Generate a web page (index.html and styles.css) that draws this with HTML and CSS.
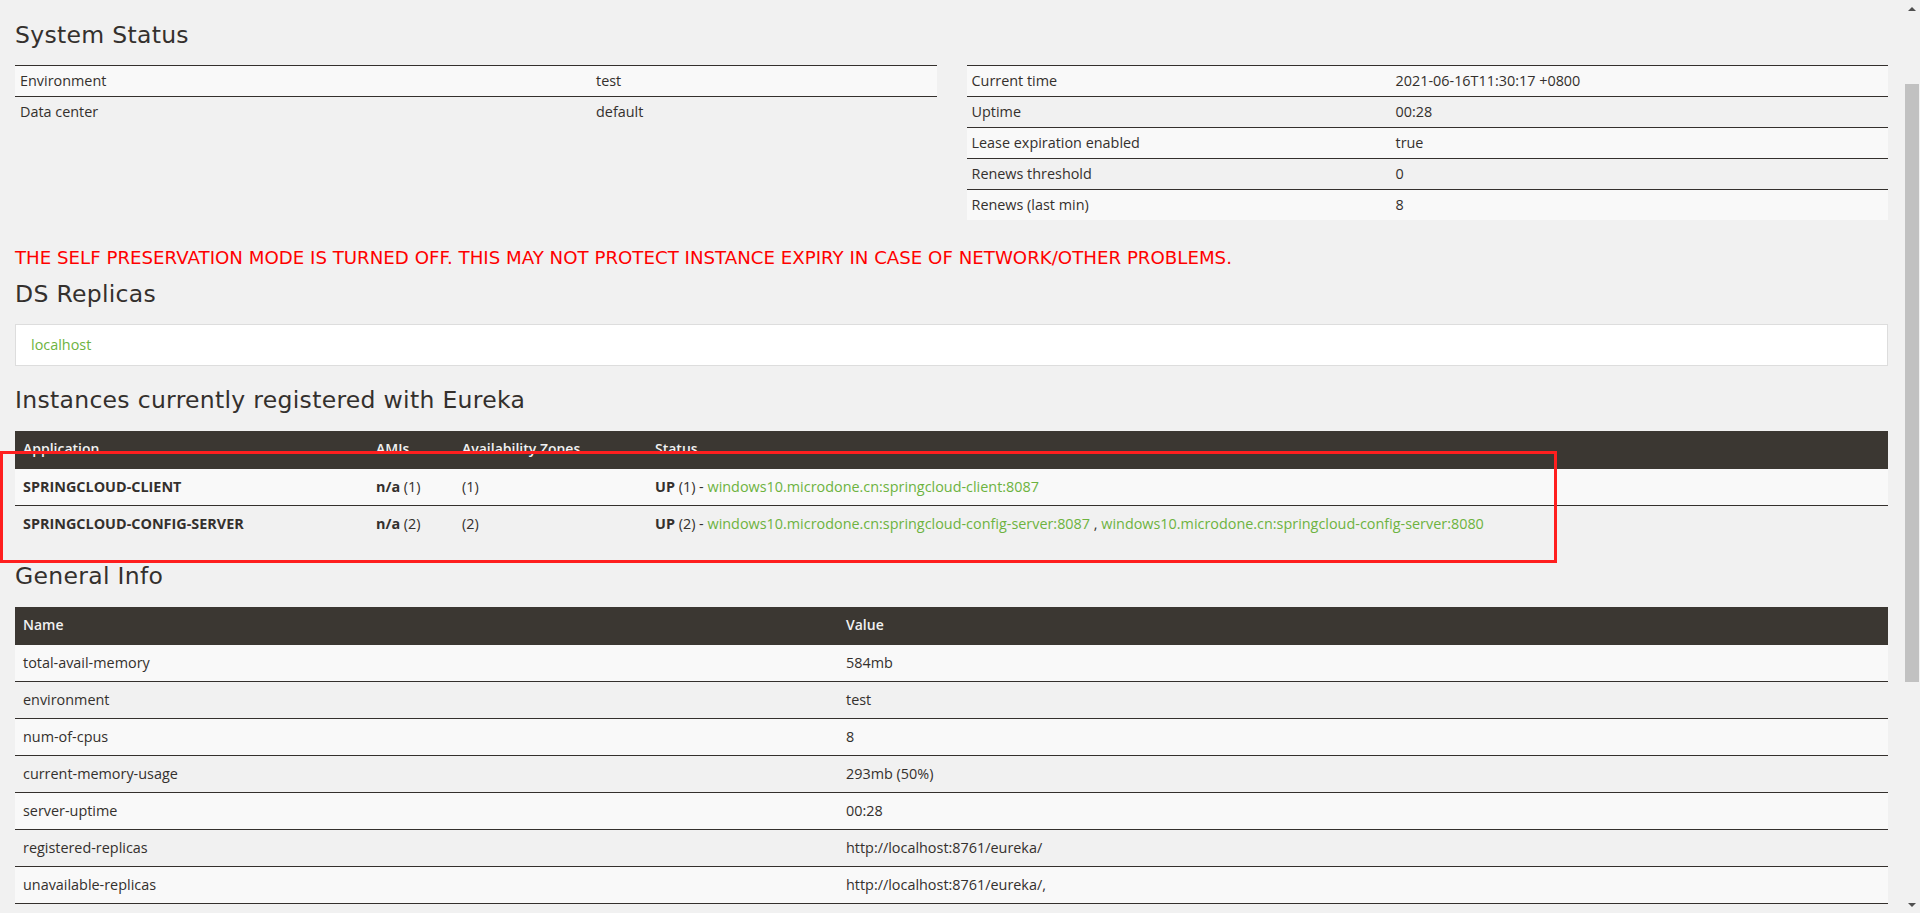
FILE: index.html
```html
<!DOCTYPE html>
<html lang="en">
<head>
<meta charset="utf-8">
<title>Eureka</title>
<link rel="stylesheet" href="styles.css">
</head>
<body>
<div class="page">
  <h2 class="title title-first">System Status</h2>
  <div class="status-row">
    <div class="half">
      <table class="kv">
        <colgroup><col class="kv-left-key"><col></colgroup>
        <tbody>
          <tr><td>Environment</td><td>test</td></tr>
          <tr><td>Data center</td><td>default</td></tr>
        </tbody>
      </table>
    </div>
    <div class="half">
      <table class="kv">
        <colgroup><col class="kv-right-key"><col></colgroup>
        <tbody>
          <tr><td>Current time</td><td>2021-06-16T11:30:17 +0800</td></tr>
          <tr><td>Uptime</td><td>00:28</td></tr>
          <tr><td>Lease expiration enabled</td><td>true</td></tr>
          <tr><td>Renews threshold</td><td>0</td></tr>
          <tr><td>Renews (last min)</td><td>8</td></tr>
        </tbody>
      </table>
    </div>
  </div>

  <h4 class="warning">THE SELF PRESERVATION MODE IS TURNED OFF. THIS MAY NOT PROTECT INSTANCE EXPIRY IN CASE OF NETWORK/OTHER PROBLEMS.</h4>

  <h2 class="title title-ds">DS Replicas</h2>
  <ul class="list-group">
    <li class="list-item"><a href="#" class="link">localhost</a></li>
  </ul>

  <h2 class="title title-section">Instances currently registered with Eureka</h2>
  <table class="grid">
    <colgroup><col class="c-app"><col class="c-ami"><col class="c-zone"><col></colgroup>
    <thead>
      <tr><th>Application</th><th>AMIs</th><th>Availability Zones</th><th>Status</th></tr>
    </thead>
    <tbody>
      <tr>
        <td><b>SPRINGCLOUD-CLIENT</b></td>
        <td><b>n/a</b> (1)</td>
        <td>(1)</td>
        <td><b>UP</b> (1) - <a href="#" class="link">windows10.microdone.cn:springcloud-client:8087</a></td>
      </tr>
      <tr>
        <td><b>SPRINGCLOUD-CONFIG-SERVER</b></td>
        <td><b>n/a</b> (2)</td>
        <td>(2)</td>
        <td><b>UP</b> (2) - <a href="#" class="link">windows10.microdone.cn:springcloud-config-server:8087</a> , <a href="#" class="link">windows10.microdone.cn:springcloud-config-server:8080</a></td>
      </tr>
    </tbody>
  </table>

  <h2 class="title title-general">General Info</h2>
  <table class="grid grid-last">
    <colgroup><col class="c-name"><col></colgroup>
    <thead>
      <tr><th>Name</th><th>Value</th></tr>
    </thead>
    <tbody>
      <tr><td>total-avail-memory</td><td>584mb</td></tr>
      <tr><td>environment</td><td>test</td></tr>
      <tr><td>num-of-cpus</td><td>8</td></tr>
      <tr><td>current-memory-usage</td><td>293mb (50%)</td></tr>
      <tr><td>server-uptime</td><td>00:28</td></tr>
      <tr><td>registered-replicas</td><td>http://localhost:8761/eureka/</td></tr>
      <tr><td>unavailable-replicas</td><td>http://localhost:8761/eureka/,</td></tr>
    </tbody>
  </table>

  <div class="annotation"></div>
</div>

<div class="scrollbar" aria-hidden="true">
  <div class="sb-btn sb-up"></div>
  <div class="sb-thumb"></div>
  <div class="sb-track"></div>
  <div class="sb-btn sb-down"></div>
</div>
</body>
</html>
```

FILE: styles.css
```css
body {
  margin: 0;
  background: #f1f1f1;
  color: #34302d;
  font-family: "Open Sans", "Liberation Sans", sans-serif;
  font-size: 14.4px;
  line-height: 20px;
  overflow: hidden;
}

.page {
  position: relative;
  margin-right: 17px;
  padding: 20px 15px 0;
}

.title {
  font-family: "DejaVu Sans", "Liberation Sans", sans-serif;
  font-weight: normal;
  font-size: 23.5px;
  line-height: 30px;
  letter-spacing: 0.3px;
  color: #34302d;
  margin: 0 0 16px;
}

.title-first {
  margin-top: 0;
  margin-bottom: 15px;
}

.title-ds {
  margin-top: 9px;
  margin-bottom: 15px;
}

.title-section {
  margin-top: 19px;
}

.title-general {
  margin-top: 19px;
}

.warning {
  font-family: "DejaVu Sans", "Liberation Sans", sans-serif;
  font-weight: normal;
  font-size: 18.2px;
  line-height: 24px;
  color: #ff0000;
  margin: 26px 0 0;
}

.status-row {
  display: flex;
  gap: 30px;
  align-items: flex-start;
}

.half {
  flex: 1 1 0;
  min-width: 0;
}

table {
  border-collapse: collapse;
  border-spacing: 0;
}

.kv {
  width: 100%;
  table-layout: fixed;
}

.kv-left-key {
  width: 576px;
}

.kv-right-key {
  width: 424px;
}

.kv td {
  padding: 5px;
  border-top: 1px solid #34302d;
  text-align: left;
  vertical-align: top;
}

.kv tr:nth-child(odd) td,
.grid tbody tr:nth-child(odd) td {
  background: #f9f9f9;
}

.list-group {
  list-style: none;
  margin: 0;
  padding: 0;
}

.list-item {
  background: #ffffff;
  border: 1px solid #dddddd;
  padding: 10px 15px;
}

.link {
  color: #6db33f;
  text-decoration: none;
}

.grid {
  width: 100%;
  table-layout: fixed;
}

.c-app {
  width: 353px;
}

.c-ami {
  width: 86px;
}

.c-zone {
  width: 193px;
}

.c-name {
  width: 823px;
}

.grid th {
  background: #3b3732;
  color: #f1f1f1;
  font-size: 14px;
  font-weight: 600;
  text-align: left;
  padding: 8px;
  border-bottom: 2px solid #3b3732;
  vertical-align: bottom;
}

.grid td {
  padding: 8px;
  border-top: 1px solid #34302d;
  vertical-align: top;
}

.grid tbody tr:first-child td {
  border-top: 0;
}

.grid-last tbody tr:last-child td {
  border-bottom: 1px solid #34302d;
}

.grid b {
  font-weight: 700;
}

.annotation {
  position: absolute;
  left: 0;
  top: 451px;
  width: 1557px;
  height: 112px;
  box-sizing: border-box;
  border: 3px solid #ff1f1f;
  pointer-events: none;
}

/* imitation of the browser's vertical scrollbar (page scrolled a little) */
.scrollbar {
  position: fixed;
  top: 0;
  right: 0;
  width: 17px;
  height: 100vh;
  background: #f1f1f1;
  display: flex;
  flex-direction: column;
}

.sb-btn {
  height: 17px;
  flex: 0 0 17px;
  display: flex;
  align-items: center;
  justify-content: center;
}

.sb-up::after,
.sb-down::after {
  content: "";
  width: 0;
  height: 0;
  border-left: 4px solid transparent;
  border-right: 4px solid transparent;
}

.sb-up::after {
  border-bottom: 4px solid #505050;
}

.sb-down::after {
  border-top: 4px solid #505050;
}

.sb-thumb {
  flex: 0 0 598px;
  margin: 67px 1px 0 2px;
  background: #c1c1c1;
}

.sb-track {
  flex: 1 1 auto;
}
```
